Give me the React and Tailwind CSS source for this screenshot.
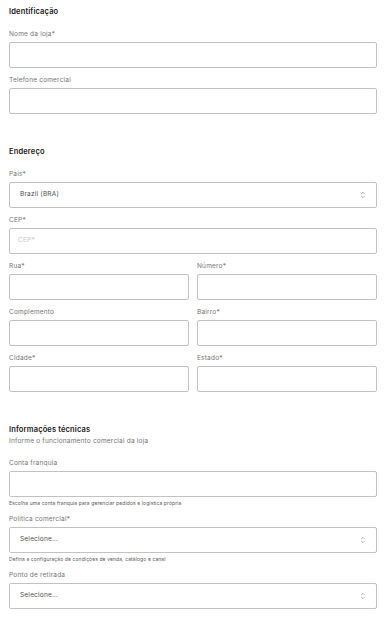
import React from 'react'

const Chevrons = () => (
    <svg width="6" height="8" viewBox="0 0 6 8" fill="none" stroke="#9a9a9a" strokeWidth="0.7" strokeLinecap="round" strokeLinejoin="round">
        <path d="M1.3 3 L3 1.3 L4.7 3" />
        <path d="M1.3 5 L3 6.7 L4.7 5" />
    </svg>
)

const Label = ({ children, req }) => (
    <p className="text-[6.5px] leading-[8px] tracking-[0.2px] text-[#747474]">{children}{req && '*'}</p>
)

const Input = ({ placeholder }) => (
    <div className="mt-[4px] h-[26px] w-full rounded-[2px] border border-[#c2c2c2] bg-white flex items-center px-[8px]">
        {placeholder && <span className="text-[6.5px] tracking-[0.2px] text-[#c8c8c8]">{placeholder}</span>}
    </div>
)

const Select = ({ value }) => (
    <div className="mt-[4px] h-[26px] w-full rounded-[2px] border border-[#c2c2c2] bg-white flex items-center justify-between pl-[10px] pr-[10px]">
        <span className="text-[6.5px] tracking-[0.2px] text-[#505050]">{value}</span>
        <Chevrons />
    </div>
)

const Helper = ({ children }) => (
    <p className="mt-[3px] text-[5px] leading-[6px] tracking-[0.1px] text-[#5a5a5a]">{children}</p>
)

const Field = ({ label, req, children }) => (
    <div className="flex flex-col">
        <Label req={req}>{label}</Label>
        {children}
    </div>
)

const Header = ({ children }) => (
    <h2 className="text-[7.5px] leading-[10px] font-semibold tracking-[0.15px] text-[#1a1a1a]">{children}</h2>
)

export default function App() {
    return (
        <div className="min-h-[625px] bg-white" style={{ fontFamily: 'Inter, "Liberation Sans", sans-serif' }}>
            <div className="w-[368px] ml-[9px] pt-[7px] flex flex-col">
                <section className="flex flex-col">
                    <Header>Identificação</Header>
                    <div className="mt-[13px] flex flex-col gap-[8px]">
                        <Field label="Nome da loja" req><Input /></Field>
                        <Field label="Telefone comercial"><Input /></Field>
                    </div>
                </section>

                <section className="mt-[33px] flex flex-col">
                    <Header>Endereço</Header>
                    <div className="mt-[13px] flex flex-col gap-[8px]">
                        <Field label="País" req><Select value="Brazil (BRA)" /></Field>
                        <Field label="CEP" req><Input placeholder="CEP*" /></Field>
                        <div className="grid grid-cols-2 gap-x-[8px] gap-y-[8px]">
                            <Field label="Rua" req><Input /></Field>
                            <Field label="Número" req><Input /></Field>
                            <Field label="Complemento"><Input /></Field>
                            <Field label="Bairro" req><Input /></Field>
                            <Field label="Cidade" req><Input /></Field>
                            <Field label="Estado" req><Input /></Field>
                        </div>
                    </div>
                </section>

                <section className="mt-[33px] flex flex-col">
                    <Header>Informações técnicas</Header>
                    <p className="mt-[2px] text-[6.5px] leading-[8px] tracking-[0.2px] text-[#747474]">Informe o funcionamento comercial da loja</p>
                    <div className="mt-[14px] flex flex-col gap-[9px]">
                        <Field label="Conta franquia">
                            <Input />
                            <Helper>Escolha uma conta franquia para gerenciar pedidos e logística própria</Helper>
                        </Field>
                        <Field label="Política comercial" req>
                            <Select value="Selecione..." />
                            <Helper>Defina a configuração de condições de venda, catálogo e canal</Helper>
                        </Field>
                        <Field label="Ponto de retirada"><Select value="Selecione..." /></Field>
                    </div>
                </section>
            </div>
        </div>
    )
}
